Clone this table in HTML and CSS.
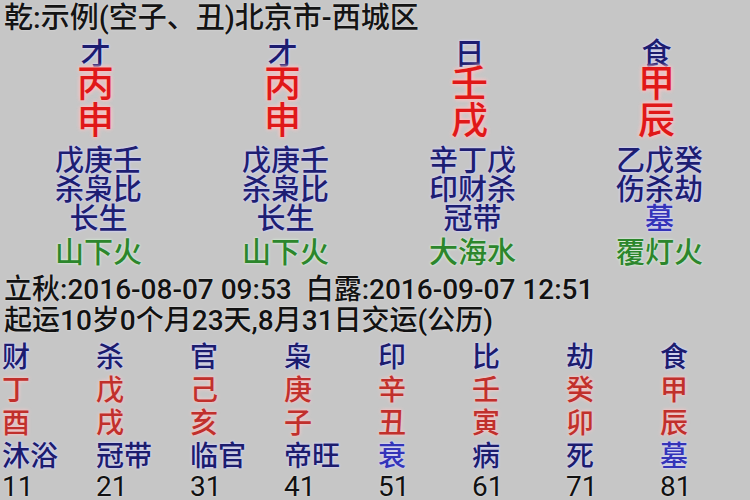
FILE: index.html
```html
<!DOCTYPE html>
<html lang="zh">
<head>
<meta charset="utf-8">
<title>八字排盘</title>
<link rel="stylesheet" href="styles.css">
</head>
<body>
<div class="page">
  <div class="title">乾:示例(空子、丑)北京市-西城区</div>

  <div class="pillars">
    <div class="pillar">
      <div class="god">才</div>
      <div class="gz">丙</div>
      <div class="gz">申</div>
      <div class="hidden first">戊庚壬</div>
      <div class="hidden">杀枭比</div>
      <div class="stage">长生</div>
      <div class="nayin">山下火</div>
    </div>
    <div class="pillar">
      <div class="god">才</div>
      <div class="gz">丙</div>
      <div class="gz">申</div>
      <div class="hidden first">戊庚壬</div>
      <div class="hidden">杀枭比</div>
      <div class="stage">长生</div>
      <div class="nayin">山下火</div>
    </div>
    <div class="pillar">
      <div class="god">日</div>
      <div class="gz">壬</div>
      <div class="gz">戌</div>
      <div class="hidden first">辛丁戊</div>
      <div class="hidden">印财杀</div>
      <div class="stage">冠带</div>
      <div class="nayin">大海水</div>
    </div>
    <div class="pillar">
      <div class="god">食</div>
      <div class="gz">甲</div>
      <div class="gz">辰</div>
      <div class="hidden first">乙戊癸</div>
      <div class="hidden">伤杀劫</div>
      <div class="stage bright">墓</div>
      <div class="nayin">覆灯火</div>
    </div>
  </div>

  <div class="info">立秋:2016-08-07 09:53&nbsp; 白露:2016-09-07 12:51</div>
  <div class="info">起运10岁0个月23天,8月31日交运(公历)</div>

  <div class="luck">
    <div class="step"><span class="lgod">财</span><span class="lgz">丁</span><span class="lgz">酉</span><span class="lstage">沐浴</span><span class="age">11</span></div>
    <div class="step"><span class="lgod">杀</span><span class="lgz">戊</span><span class="lgz">戌</span><span class="lstage">冠带</span><span class="age">21</span></div>
    <div class="step"><span class="lgod">官</span><span class="lgz">己</span><span class="lgz">亥</span><span class="lstage">临官</span><span class="age">31</span></div>
    <div class="step"><span class="lgod">枭</span><span class="lgz">庚</span><span class="lgz">子</span><span class="lstage">帝旺</span><span class="age">41</span></div>
    <div class="step"><span class="lgod">印</span><span class="lgz">辛</span><span class="lgz">丑</span><span class="lstage bright">衰</span><span class="age">51</span></div>
    <div class="step"><span class="lgod">比</span><span class="lgz">壬</span><span class="lgz">寅</span><span class="lstage">病</span><span class="age">61</span></div>
    <div class="step"><span class="lgod">劫</span><span class="lgz">癸</span><span class="lgz">卯</span><span class="lstage">死</span><span class="age">71</span></div>
    <div class="step"><span class="lgod">食</span><span class="lgz">甲</span><span class="lgz">辰</span><span class="lstage bright">墓</span><span class="age">81</span></div>
  </div>
</div>
</body>
</html>
```

FILE: styles.css
```css
html, body {
  margin: 0;
  padding: 0;
}

body {
  background: #c6c6c6;
  width: 750px;
  height: 500px;
  overflow: hidden;
  font-family: Roboto, "Noto Sans CJK SC", sans-serif;
  font-weight: 500;
  color: #111;
}

.page {
  display: flex;
  flex-direction: column;
}

.title {
  font-size: 29px;
  line-height: 37px;
  padding-left: 4px;
  color: #141414;
  text-shadow: 0 0 2px #e8e8e8;
}

.pillars {
  display: grid;
  grid-template-columns: repeat(4, 1fr);
  padding-left: 2px;
  height: 237px;
}

.pillar {
  display: flex;
  flex-direction: column;
  align-items: center;
  text-align: center;
}

.god {
  font-family: "Noto Sans CJK SC", sans-serif;
  font-size: 30px;
  line-height: 29px;
  color: #1c1c70;
  text-shadow: 0 0 2px #d6d6ff, 0 0 3px #d6d6ff;
}

.gz {
  font-size: 37px;
  line-height: 37px;
  color: #e01818;
  text-shadow: 0 0 2px #ffb8b8, 0 0 4px #ffc4c4, 0 0 5px #ffc4c4;
}

.hidden {
  font-size: 29px;
  line-height: 29px;
  padding-left: 6px;
  color: #1e1e72;
  text-shadow: 0 0 2px #d4d4ff, 0 0 3px #d4d4ff;
}

.hidden.first {
  margin-top: 7px;
}

.stage {
  font-size: 29px;
  line-height: 29px;
  padding-left: 6px;
  color: #1e1e72;
  text-shadow: 0 0 2px #d4d4ff, 0 0 3px #d4d4ff;
}

.stage.bright,
.lstage.bright {
  color: #3434b8;
}

.nayin {
  font-size: 29px;
  line-height: 30px;
  margin-top: 4px;
  padding-left: 6px;
  color: #2c862c;
  text-shadow: 0 0 2px #d8f0d8, 0 0 3px #d8f0d8;
}

.info {
  font-size: 28px;
  line-height: 31px;
  padding-left: 4px;
  color: #121212;
  text-shadow: 0 0 2px #ececec;
}

.luck {
  display: grid;
  grid-template-columns: repeat(8, 94px);
  padding-left: 2px;
  margin-top: 5px;
}

.step {
  display: flex;
  flex-direction: column;
  align-items: flex-start;
  font-size: 28px;
  line-height: 33px;
}

.lgod,
.lstage {
  color: #1c1c6e;
  text-shadow: 0 0 2px #d6d6ff, 0 0 3px #d6d6ff;
}

.lgz {
  color: #c0302c;
  text-shadow: 0 0 2px #ffc0c0, 0 0 4px #ffcaca;
}

.age {
  line-height: 27px;
  color: #111;
  font-weight: 400;
  text-shadow: 0 0 2px #eeeeee;
}
```
